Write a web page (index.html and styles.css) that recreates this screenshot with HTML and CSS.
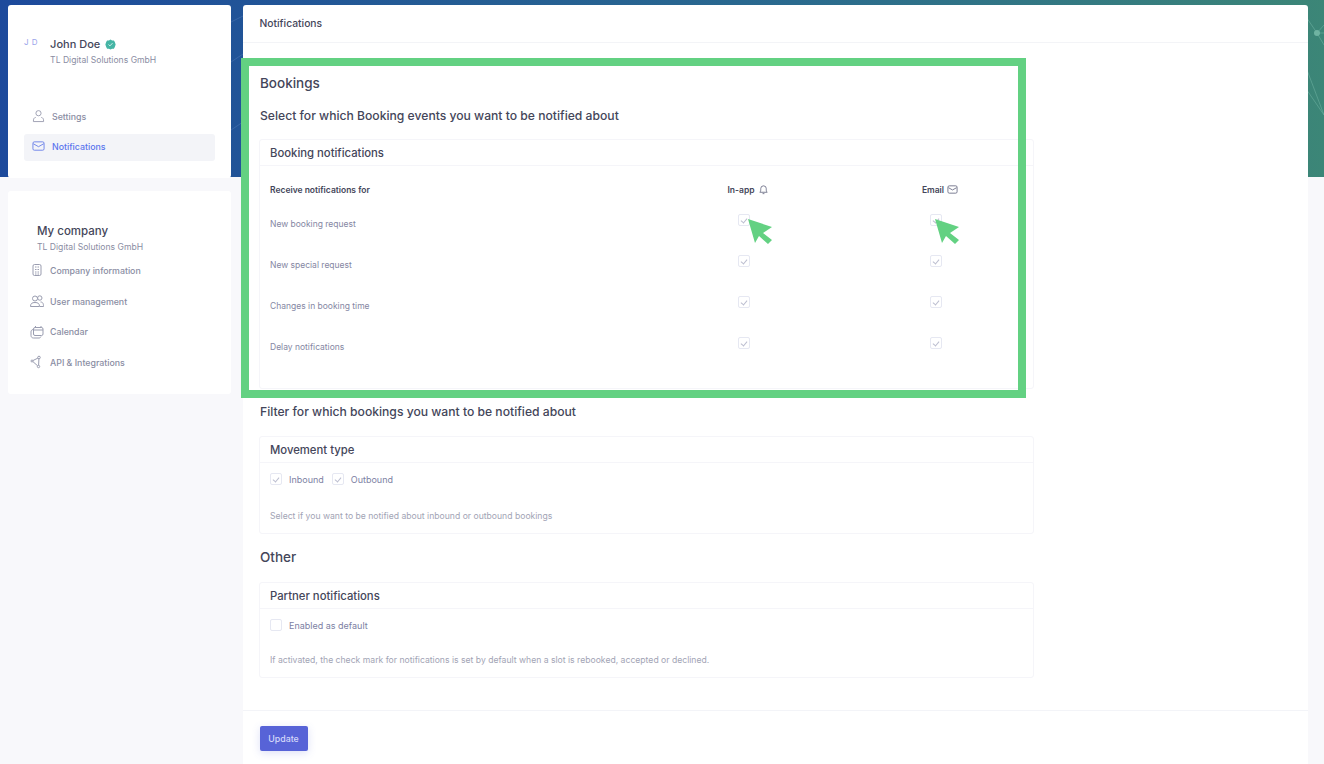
FILE: index.html
```html
<!DOCTYPE html>
<html lang="en">
<head>
    <meta charset="UTF-8">
    <title>Notifications</title>
    <link rel="stylesheet" href="styles.css">
</head>
<body>
    <div class="page">
        <svg class="hero-lines" width="1324" height="177" viewBox="0 0 1324 177" fill="none" stroke="#6fb3a2" stroke-opacity="0.55">
            <path d="M1317 33l-17 -25M1317 33l7 -8M1317 33h7M1317 33l7 12M1307 70l17 45M1300 80l24 35"/>
            <circle cx="1317" cy="33" r="3" fill="#6fb3a2" stroke="none"/>
            <path d="M231 22l12 -6M231 62l12 -8M231 130l12 -8" stroke="#5b82bd" stroke-opacity="0.4"/>
        </svg>
        <div class="sidebar">
            <div class="side-card profile-card">
                <div class="profile">
                    <span class="initials">J D</span>
                    <div>
                        <div class="profile-name">John Doe
                            <svg class="verified" width="11" height="11" viewBox="0 0 12 12"><path d="M6 .5l1.700 1h2l1 1.800L11.600 6l-.9 2.700-1 1.800h-2L6 11.500l-1.700-1h-2l-1-1.800L.4 6l.9-2.700 1-1.800h2z" fill="#45b5a5"/><path d="M3.800 6l1.600 1.500 2.800-3" fill="none" stroke="#d8f3ee" stroke-width="1"/></svg>
                        </div>
                        <div class="profile-company">TL Digital Solutions GmbH</div>
                    </div>
                </div>
                <a class="nav-item settings-item">
                    <svg width="13" height="14" viewBox="0 0 14 14" fill="none" stroke="#9a9db0"><circle cx="7" cy="4" r="2.800"/><path d="M4 8.500C2 9 1.500 10 1.500 13h11c0-3-.5-4-2.500-4.500"/></svg>
                    Settings
                </a>
                <a class="nav-item active">
                    <svg width="13" height="13" viewBox="0 0 14 14" fill="none" stroke="#6c82e8"><rect x="1" y="2" width="12" height="9" rx="1.500"/><path d="M1.300 4L7 7.200 12.700 4"/></svg>
                    Notifications
                </a>
            </div>
            <div class="side-card company-card">
                <div class="company-title">My company</div>
                <div class="company-sub">TL Digital Solutions GmbH</div>
                <a class="nav-item company-item">
                    <svg width="14" height="14" viewBox="0 0 14 14" fill="none" stroke="#9a9db0"><rect x="3" y="1.500" width="8" height="11" rx="1.500"/><path d="M5 4h1.500M7.500 4H9M5 6.500h1.500M7.500 6.500H9M5 9h1.500M7.500 9H9M5 11h1.500M7.500 11H9"/></svg>
                    Company information
                </a>
                <a class="nav-item company-item">
                    <svg width="14" height="14" viewBox="0 0 14 14" fill="none" stroke="#9a9db0"><circle cx="5" cy="4.500" r="2.500"/><circle cx="9.800" cy="4" r="2.200"/><path d="M.5 12.500c0-3 1.500-4 4.500-4s4.500 1 4.500 4zM10.500 8c2 0 3 1 3 4.500h-3.500"/></svg>
                    User management
                </a>
                <a class="nav-item company-item">
                    <svg width="14" height="14" viewBox="0 0 14 14" fill="none" stroke="#9a9db0"><rect x="3.500" y="2.500" width="9.500" height="8" rx="1.500"/><path d="M3.500 5h9.500M5.500 1v2M11 1v2M3 4.500C1.500 5 1 5.500 1 7v3.500C1 12 2 13 3.500 13H9c1 0 1.500-.5 2-1.500"/></svg>
                    Calendar
                </a>
                <a class="nav-item company-item">
                    <svg width="14" height="14" viewBox="0 0 14 14" fill="none" stroke="#9a9db0"><circle cx="9" cy="2.500" r="1.300"/><circle cx="2" cy="6" r="1"/><circle cx="8.500" cy="11.500" r="1.200"/><path d="M3 5.500l4.900-2.400M2.900 6.600l4.600 4.100M8.900 3.800l-.3 6.500"/></svg>
                    API &amp; Integrations
                </a>
            </div>
        </div>

        <div class="main-card">
            <div class="main-header">Notifications</div>
            <div class="main-body">
                <h2 class="section-title">Bookings</h2>
                <h3 class="section-sub">Select for which Booking events you want to be notified about</h3>

                <div class="box booking-box">
                    <div class="box-header">Booking notifications</div>
                    <div class="notify-table">
                        <div class="th">Receive notifications for</div>
                        <div class="th th-channel">In-app
                            <svg width="11" height="11" viewBox="0 0 12 12" fill="none" stroke="#71738a"><path d="M2 9c1-1 1-2 1-4a3 3 0 0 1 6 0c0 2 0 3 1 4zM5 10.500h2"/></svg>
                        </div>
                        <div class="th th-channel">Email
                            <svg width="11" height="11" viewBox="0 0 12 12" fill="none" stroke="#71738a"><rect x="1" y="2" width="10" height="8" rx="1.500"/><path d="M1.500 4L6 6.500 10.500 4"/></svg>
                        </div>

                        <div class="td">New booking request</div>
                        <div class="td-check"><span class="check on"></span></div>
                        <div class="td-check"><span class="check on"></span></div>

                        <div class="td">New special request</div>
                        <div class="td-check"><span class="check on"></span></div>
                        <div class="td-check"><span class="check on"></span></div>

                        <div class="td">Changes in booking time</div>
                        <div class="td-check"><span class="check on"></span></div>
                        <div class="td-check"><span class="check on"></span></div>

                        <div class="td">Delay notifications</div>
                        <div class="td-check"><span class="check on"></span></div>
                        <div class="td-check"><span class="check on"></span></div>
                    </div>
                </div>

                <h3 class="section-sub filter-sub">Filter for which bookings you want to be notified about</h3>

                <div class="box">
                    <div class="box-header">Movement type</div>
                    <div class="box-body">
                        <div class="check-row">
                            <span class="check on"></span><span class="check-label">Inbound</span>
                            <span class="check on"></span><span class="check-label">Outbound</span>
                        </div>
                        <div class="help move-help">Select if you want to be notified about inbound or outbound bookings</div>
                    </div>
                </div>

                <h2 class="section-title other-title">Other</h2>

                <div class="box">
                    <div class="box-header">Partner notifications</div>
                    <div class="box-body">
                        <div class="check-row">
                            <span class="check"></span><span class="check-label">Enabled as default</span>
                        </div>
                        <div class="help partner-help">If activated, the check mark for notifications is set by default when a slot is rebooked, accepted or declined.</div>
                    </div>
                </div>
            </div>
            <div class="main-footer">
                <button class="update-btn">Update</button>
            </div>
        </div>

        <div class="highlight"></div>
        <svg class="pointer pointer-app" width="25" height="25" viewBox="0 0 25 25"><path d="M0 0l24 8-9 6 9 7-4 4-9-8-4 7z" fill="#63d182"/></svg>
        <svg class="pointer pointer-email" width="25" height="25" viewBox="0 0 25 25"><path d="M0 0l24 8-9 6 9 7-4 4-9-8-4 7z" fill="#63d182"/></svg>
    </div>
</body>
</html>
```

FILE: styles.css
```css
* {
    box-sizing: border-box;
}
html, body {
    margin: 0;
    height: 100%;
    overflow: hidden;
}
body {
    font-family: Inter, "Open Sans", sans-serif;
    color: #44465a;
    background-color: #f8f8fb;
    background-image: linear-gradient(90deg, #1d4a9c 0%, #2a6a8e 60%, #3c8677 100%);
    background-size: 100% 177px;
    background-repeat: no-repeat;
}
.page {
    position: relative;
    display: flex;
    gap: 12px;
    height: 764px;
    padding: 5px 16px 0 8px;
    overflow: hidden;
}
.hero-lines {
    position: absolute;
    left: 0;
    top: 0;
}

/* left column */
.sidebar {
    position: relative;
    width: 223px;
    flex: none;
    display: flex;
    flex-direction: column;
    gap: 13px;
}
.side-card {
    background: white;
    border-radius: 3px;
}
.profile-card {
    height: 173px;
    padding: 0 16px;
}
.profile {
    display: flex;
    gap: 12px;
    padding-top: 26px;
    height: 96px;
}
.initials {
    font-size: 8px;
    letter-spacing: 0.5px;
    line-height: 22px;
    color: #9aa4ea;
}
.profile-name {
    font-size: 11px;
    line-height: 26px;
    font-weight: 500;
    height: 23px;
}
.verified {
    vertical-align: -2px;
    margin-left: 2px;
}
.profile-company {
    font-size: 8.600px;
    line-height: 12px;
    color: #8a8da3;
}
.nav-item {
    display: flex;
    align-items: center;
    gap: 7px;
    height: 27px;
    font-size: 8.800px;
    font-weight: 500;
    color: #8a8da3;
}
.settings-item {
    height: 33px;
    padding: 0 8px 3px;
}
.nav-item.active {
    padding: 0 8px 2px;
    background: #f3f4f8;
    border-radius: 3px;
    color: #5a74ee;
}
.company-card {
    height: 203px;
    padding: 32px 0 0 22px;
}
.company-title {
    font-size: 11.500px;
    line-height: 16px;
    font-weight: 500;
    padding-left: 7px;
}
.company-sub {
    font-size: 8.600px;
    line-height: 16px;
    padding-left: 7px;
    color: #8a8da3;
}
.company-item {
    height: 30.700px;
    gap: 6px;
}

/* main card */
.main-card {
    position: relative;
    flex: 1;
    background: white;
    border-radius: 3px 3px 0 0;
    display: flex;
    flex-direction: column;
}
.main-header {
    height: 38px;
    padding: 0 16.500px;
    font-size: 10.300px;
    font-weight: 500;
    line-height: 37px;
    border-bottom: 1px solid #f3f4f7;
}
.main-body {
    height: 668px;
    flex: none;
    padding: 0 16px 0 17px;
    border-bottom: 1px solid #f3f4f8;
}
.section-title {
    margin: 0;
    font-size: 13.500px;
    line-height: 20px;
    font-weight: 500;
    padding-top: 30px;
    height: 49px;
}
.section-sub {
    margin: 0;
    font-size: 12.150px;
    line-height: 16px;
    font-weight: 500;
    padding-top: 16px;
    height: 47px;
}
.filter-sub {
    padding-top: 15px;
    height: 47px;
}
.other-title {
    padding-top: 13px;
    height: 48px;
}
.box {
    width: 775px;
    margin-left: -1px;
    border: 1px solid #f5f5f9;
    border-radius: 3px;
}
.booking-box {
    height: 250px;
}
.box-header {
    height: 26px;
    padding: 1px 10px 0;
    font-size: 11.300px;
    font-weight: 500;
    line-height: 25px;
    border-bottom: 1px solid #f5f5f9;
}
.box-body {
    padding: 0 10px;
}
.notify-table {
    display: grid;
    grid-template-columns: 1fr 192px 192px;
    grid-template-rows: 37px repeat(4, 41px);
    padding: 0 1px 0 10px;
    align-items: center;
}
.th {
    font-size: 8.500px;
    font-weight: 600;
    padding-top: 10px;
}
.th-channel {
    display: flex;
    justify-content: center;
    align-items: center;
    gap: 3px;
    padding-left: 8px;
}
.td {
    font-size: 8.500px;
    color: #8587a3;
}
.td-check {
    display: flex;
    justify-content: center;
    padding: 0 1px 8px 0;
}
.check {
    position: relative;
    display: block;
    width: 12px;
    height: 12px;
    flex: none;
    border: 1px solid #e6e8f2;
    border-radius: 2px;
}
.check.on::after {
    content: "";
    position: absolute;
    left: 3px;
    top: 2px;
    width: 3px;
    height: 5px;
    border-right: 1px solid #bcbed0;
    border-bottom: 1px solid #bcbed0;
    transform: rotate(40deg);
}
.check-row {
    display: flex;
    align-items: center;
    gap: 7px;
    height: 32px;
}
.check-label {
    font-size: 9px;
    color: #7d7fa3;
}
.check-label + .check {
    margin-left: 1px;
}
.help {
    font-size: 8.650px;
    color: #a2a4b5;
}
.move-help {
    padding-top: 16px;
    height: 38px;
}
.partner-help {
    padding-top: 14px;
    height: 36px;
}
.main-footer {
    padding: 15px 16.500px;
}
.update-btn {
    display: block;
    width: 48px;
    height: 25px;
    padding: 0;
    border: none;
    border-radius: 2px;
    background: #5763d7;
    color: #d5d9fa;
    font-family: Inter, sans-serif;
    font-size: 8.800px;
    font-weight: 500;
    box-shadow: 0 2px 8px rgba(87, 99, 215, 0.2);
}

/* tutorial overlay */
.highlight {
    position: absolute;
    left: 241px;
    top: 58px;
    width: 785px;
    height: 340px;
    border: 8px solid #63d182;
}
.pointer {
    position: absolute;
    top: 219px;
}
.pointer-app {
    left: 748px;
}
.pointer-email {
    left: 935px;
}
```
